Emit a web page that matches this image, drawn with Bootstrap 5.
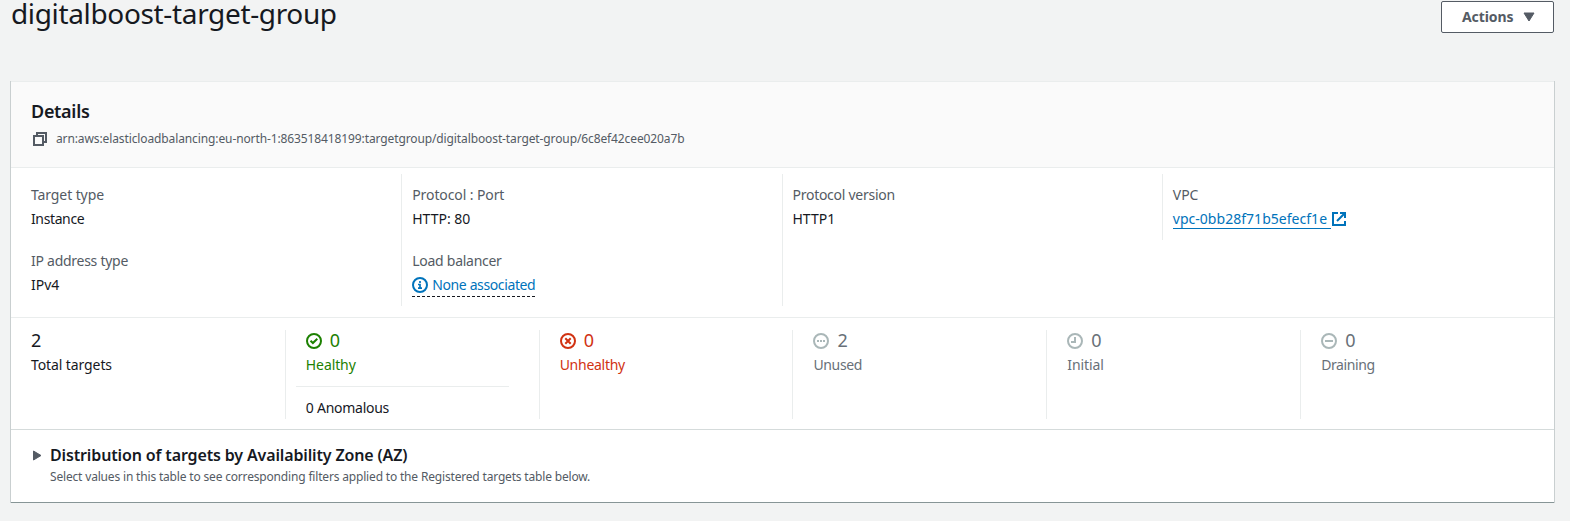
<!DOCTYPE html>
<html lang="en">
<head>
<meta charset="utf-8">
<meta name="viewport" content="width=device-width, initial-scale=1">
<title>digitalboost-target-group</title>
<link href="https://cdn.jsdelivr.net/npm/bootstrap@5.3.0/dist/css/bootstrap.min.css" rel="stylesheet">
<style>
  body { background: #f2f3f3; color: #16191f; font: 14px/22px "Noto Sans", sans-serif; }
  .page { padding: 1px 16px 0 11px; }
  .page-title { font-size: 28px; line-height: 26px; margin: -1px 0 0; letter-spacing: -.35px; font-weight: 400; }
  .btn-actions { --bs-btn-color: #545b64; --bs-btn-bg: #fff; --bs-btn-border-color: #545b64;
    width: 113px; height: 32px; padding: 0 18px 0 20px; border-radius: 2px;
    font-size: 14px; font-weight: 700; line-height: 22px; letter-spacing: -.1px; }
  .panel { margin-top: 48px; background: #fff; border-radius: 0; border: 0; border-top: 1px solid #eaeded; border-bottom: 1px solid #879596; color: inherit;
    box-shadow: 1px 0 0 0 #c9cfd0, -1px 0 0 0 #c9cfd0, 0 1px 1px 0 rgba(0,28,36,.15); }
  .panel-head { height: 86px; padding: 18px 20px 0; background: #fafafa; border-bottom: 1px solid #eaeded; }
  .panel-title { font-size: 18px; line-height: 22px; font-weight: 600; letter-spacing: -.3px; }
  .arn { margin-top: 8px; font-size: 12px; line-height: 18px; color: #545b64; letter-spacing: -.112px; gap: 9px; padding-left: 2px; }
  .arn svg { margin-top: -1px; }
  .info { padding: 6px 12px 11px 10px; }
  .info .cell { height: 66px; padding: 10px 10px 0; border-left: 1px solid #eaeded; }
  .info .cell.first { border-left-color: transparent; padding-left: 9px; }
  .term { color: #545b64; margin-bottom: 2px; }
  .lnk { color: #0073bb; text-decoration: none; }
  .lnk svg { margin-top: 3px; }
  .lnk-vpc { letter-spacing: .03px; }
  .lnk-vpc svg { margin: 4px 0 0 1px; }
  .lnk-vpc span { border-bottom: 1px solid #0073bb; white-space: pre; height: 21px; line-height: 22px; }
  .lnk-lb { border-bottom: 1px dashed #16191f; height: 23px; gap: 4px; }
  .stats { height: 113px; margin: 0; padding: 12px 0 0 20px; border-top: 1px solid #eaeded; border-bottom: 1px solid #d5dbdb; }
  .stat { height: 89px; padding: 0 0 0 20px; border-left: 1px solid #eaeded; }
  .stat.first { padding-left: 0; border-left: 0; }
  .num { font-size: 18px; line-height: 20px; height: 22px; gap: 8px; }
  .num svg { margin-top: 3px; }
  .tag { margin-top: 2px; }
  .anom { margin: 10px 30px 0 -10px; border-top: 1px solid #eaeded; padding: 10px 0 0 10px; color: #16191f; letter-spacing: -.26px; }
  .ok { color: #1d8102; } .bad { color: #d13212; } .mute { color: #687078; } .mute svg { color: #aab7b8; }
  .dist { height: 72px; padding: 14px 20px 0 22px; gap: 8px; }
  .dist svg { margin-top: 6px; }
  .dist-title { font-size: 16px; line-height: 22px; font-weight: 600; letter-spacing: -.14px; }
  .dist-text { font-size: 12px; line-height: 18px; color: #545b64; letter-spacing: -.175px; margin-top: 2px; }
  .t1 { letter-spacing: -.1px; } .t2 { letter-spacing: -.27px; } .t3 { letter-spacing: -.38px; }
  svg { flex: none; display: block; }
</style>
</head>
<body>
<main class="page">
  <header class="d-flex justify-content-between align-items-start">
    <h1 class="page-title">digitalboost-target-group</h1>
    <button type="button" class="btn btn-actions d-flex align-items-center justify-content-between">Actions
      <svg width="12" height="10" viewBox="0 0 12 10"><path d="M1 1h10L6 9z" fill="currentColor" stroke="currentColor" stroke-linejoin="round"/></svg>
    </button>
  </header>

  <section class="card panel">
    <div class="panel-head">
      <h2 class="panel-title m-0">Details</h2>
      <div class="arn d-flex align-items-center">
        <svg width="14" height="14" viewBox="0 0 14 14" fill="none" stroke="currentColor" stroke-width="2"><path d="M1 4h9v9H1z"/><path d="M4 4V1h9v9h-3"/></svg>
        <span>arn:aws:elasticloadbalancing:eu-north-1:863518418199:targetgroup/digitalboost-target-group/6c8ef42cee020a7b</span>
      </div>
    </div>

    <div class="info">
      <div class="row g-0">
        <div class="col-3 cell first"><div class="term t1">Target type</div><div class="t3">Instance</div></div>
        <div class="col-3 cell"><div class="term t1">Protocol : Port</div><div>HTTP: 80</div></div>
        <div class="col-3 cell"><div class="term t2">Protocol version</div><div>HTTP1</div></div>
        <div class="col-3 cell"><div class="term">VPC</div>
          <a href="#" class="lnk lnk-vpc d-flex"><span>vpc-0bb28f71b5efecf1e </span>
            <svg width="14" height="14" viewBox="0 0 14 14" fill="none" stroke="currentColor" stroke-width="2"><path d="M6 1H1v12h12V9"/><path d="M8 1h5v5M13 1 5 9"/></svg></a>
        </div>
      </div>
      <div class="row g-0">
        <div class="col-3 cell first"><div class="term t2">IP address type</div><div>IPv4</div></div>
        <div class="col-3 cell"><div class="term t2">Load balancer</div>
          <a href="#" class="lnk lnk-lb d-inline-flex"><svg width="16" height="16" viewBox="0 0 16 16" fill="none" stroke="currentColor" stroke-width="2"><circle cx="8" cy="8" r="7"/><path d="M8 4v2M6 7.5h2V11M6 11.2h4" stroke-width="1.7"/></svg><span class="t3">None associated</span></a>
        </div>
        <div class="col-3 cell"></div>
      </div>
    </div>

    <div class="row g-0 stats">
      <div class="col-2 stat first"><div class="num">2</div><div class="tag t1">Total targets</div></div>
      <div class="col-2 stat ok">
        <div class="num d-flex align-items-start"><svg width="16" height="16" viewBox="0 0 16 16" fill="none" stroke="currentColor" stroke-width="2"><circle cx="8" cy="8" r="7"/><path d="m4.5 7.7 2.4 2.3 4.4-4.2"/></svg>0</div>
        <div class="tag t1">Healthy</div>
        <div class="anom">0 Anomalous</div>
      </div>
      <div class="col-2 stat bad">
        <div class="num d-flex align-items-start"><svg width="16" height="16" viewBox="0 0 16 16" fill="none" stroke="currentColor" stroke-width="2"><circle cx="8" cy="8" r="7"/><path d="m5.3 5.3 5.4 5.4M10.7 5.3l-5.4 5.4"/></svg>0</div>
        <div class="tag t2">Unhealthy</div>
      </div>
      <div class="col-2 stat mute">
        <div class="num d-flex align-items-start"><svg width="16" height="16" viewBox="0 0 16 16" fill="none" stroke="currentColor" stroke-width="2"><circle cx="8" cy="8" r="7"/><path d="M4 8h8" stroke-dasharray="2 1"/></svg>2</div>
        <div class="tag t3">Unused</div>
      </div>
      <div class="col-2 stat mute">
        <div class="num d-flex align-items-start"><svg width="16" height="16" viewBox="0 0 16 16" fill="none" stroke="currentColor" stroke-width="2"><circle cx="8" cy="8" r="7"/><path d="M8 4v5H4"/></svg>0</div>
        <div class="tag t1">Initial</div>
      </div>
      <div class="col-2 stat mute">
        <div class="num d-flex align-items-start"><svg width="16" height="16" viewBox="0 0 16 16" fill="none" stroke="currentColor" stroke-width="2"><circle cx="8" cy="8" r="7"/><path d="M4 8h8"/></svg>0</div>
        <div class="tag t3">Draining</div>
      </div>
    </div>

    <div class="dist d-flex">
      <svg width="9" height="11" viewBox="0 0 9 11"><path d="M.5 1v9L8 5.5z" fill="#545b64" stroke="#545b64" stroke-linejoin="round"/></svg>
      <div>
        <h3 class="dist-title m-0">Distribution of targets by Availability Zone (AZ)</h3>
        <div class="dist-text">Select values in this table to see corresponding filters applied to the Registered targets table below.</div>
      </div>
    </div>
  </section>
</main>
<script src="https://cdn.jsdelivr.net/npm/bootstrap@5.3.0/dist/js/bootstrap.bundle.min.js"></script>
</body>
</html>
